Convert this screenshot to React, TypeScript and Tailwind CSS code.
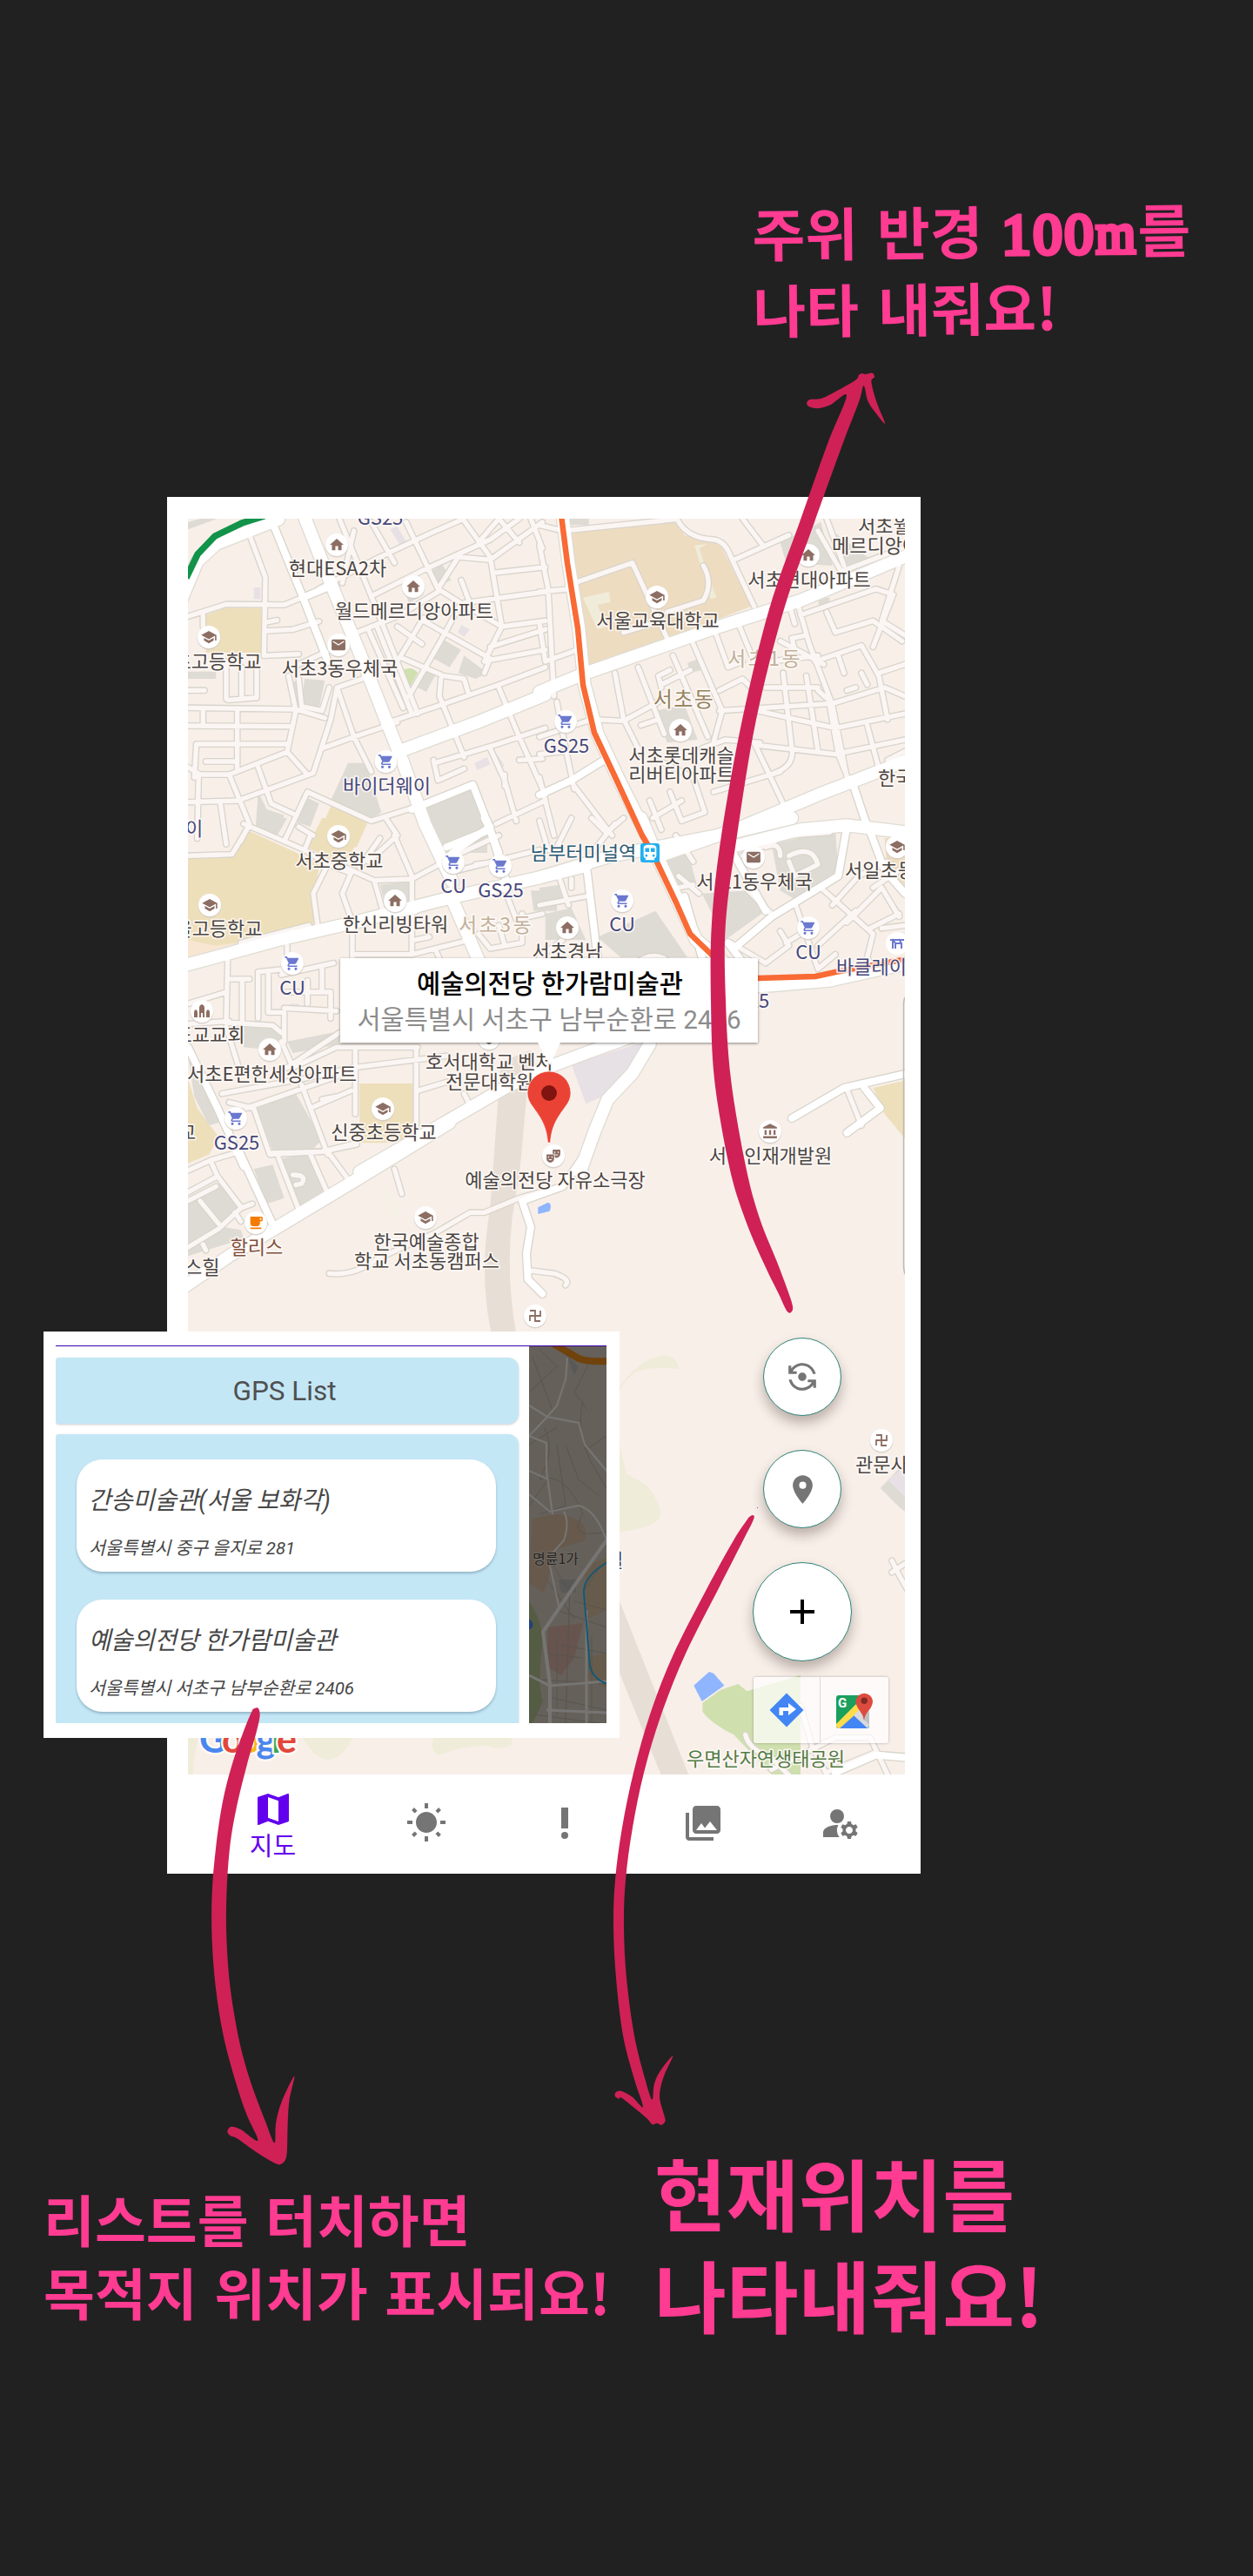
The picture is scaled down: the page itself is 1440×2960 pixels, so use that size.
import React from "react";
import {
  MdAccountBalance,
  MdAdd,
  MdDirectionsTransit,
  MdFlipCameraAndroid,
  MdHome,
  MdLocalCafe,
  MdLocationOn,
  MdMail,
  MdManageAccounts,
  MdMap,
  MdPhotoLibrary,
  MdPriorityHigh,
  MdSchool,
  MdShoppingCart,
  MdTheaterComedy,
  MdWbSunny,
} from "react-icons/md";

type Pt = [number, number];

/* ---------- geometry helpers ---------- */

function place(points: Pt[], ox: number, oy: number, sx: number, sy: number): Pt[] {
  return points.map(([x, y]) => [ox + x * sx, oy + y * sy] as Pt);
}

function smooth(p: Pt[]): string {
  let d = `M${p[0][0].toFixed(1)} ${p[0][1].toFixed(1)}`;
  for (let i = 0; i < p.length - 1; i++) {
    const a = p[Math.max(0, i - 1)];
    const b = p[i];
    const c = p[i + 1];
    const e = p[Math.min(p.length - 1, i + 2)];
    const c1 = [b[0] + (c[0] - a[0]) / 6, b[1] + (c[1] - a[1]) / 6];
    const c2 = [c[0] - (e[0] - b[0]) / 6, c[1] - (e[1] - b[1]) / 6];
    d += `C${c1[0].toFixed(1)} ${c1[1].toFixed(1)} ${c2[0].toFixed(1)} ${c2[1].toFixed(1)} ${c[0].toFixed(1)} ${c[1].toFixed(1)}`;
  }
  return d + "Z";
}

/* ---------- map data: every tile is drawn at three units per pixel ---------- */

type Area = [string, string];
type Tile = { x: number; y: number; areas: Area[]; minor: string[]; mid: string[]; major: string[] };

const GRAY = "#dedbd4";
const TAN = "#eedfbb";
const CAMPUS = "#eedcc1";
const LILAC = "#e7e1e6";
const GREEN = "#cfdfae";
const PALE = "#efecd9";
const WATER = "#8fb5ff";

const tiles: Tile[] = [
  {
    x: 180,
    y: 560,
    areas: [
      ["M168 440L240 415H360V570H170Z", TAN],
      ["M600 1100L730 1150L690 1240H540Z", TAN],
      ["M108 635H205V660H108Z", GRAY],
      ["M108 145L210 108H150L108 120Z", GRAY],
      ["M510 660L580 665L560 760L500 745Z", GRAY],
      ["M470 670L500 670L485 740Z", GRAY],
      ["M660 950L720 950L775 1120L745 1140L600 1080Z", GRAY],
      ["M920 1110L1085 1040L1140 1180V1260H990Z", GRAY],
      ["M500 1060L560 1090L530 1170L470 1150Z", GRAY],
      ["M350 1050L380 1110L440 1130L410 1200L340 1190Z", GRAY],
      ["M945 290L985 265L1015 320L970 340Z", GRAY],
      ["M980 520L1050 560L1010 620L955 590Z", GRAY],
      ["M1060 580L1140 640L1100 660L1040 640Z", GRAY],
      ["M930 620L965 640L930 705L900 690Z", GRAY],
      ["M850 340L900 330L920 370L870 400Z", GRAY],
      ["M335 345H358V385H335Z", LILAC],
      ["M805 145L830 135L860 185L840 200Z", LILAC],
      ["M1050 475L1080 490L1060 515L1038 500Z", LILAC],
      ["M1095 950L1140 930L1150 955L1105 975Z", LILAC],
      ["M1175 920L1200 960L1180 980Z", LILAC],
      ["M850 630Q880 615 900 640L875 685Z", GREEN],
    ],
    minor: [
      "M315 150L375 310L370 580L490 575",
      "M108 445L240 403L440 405L600 340",
      "M375 495L470 490L560 462",
      "M380 465L415 458",
      "M160 440V480",
      "M240 600V725Q240 733 250 733L345 725V620",
      "M293 620V725",
      "M108 760L480 765L580 795",
      "M108 822L460 824",
      "M160 765V820",
      "M278 765V975",
      "M130 1000L137 885L450 885",
      "M170 945H270",
      "M108 965L150 990L250 990L450 912L480 770L455 650",
      "M450 912L520 990",
      "M350 965L395 1090L470 1125",
      "M250 990L320 1160L290 1220",
      "M108 1085L280 1080L540 985L600 800L622 690L710 660",
      "M520 1050L440 1220",
      "M520 1050L740 1150L900 1100",
      "M570 900L680 860L830 810",
      "M622 690L680 860L740 980",
      "M490 660L500 755L570 770L595 690",
      "M490 610L600 560",
      "M145 990L140 1210",
      "M220 1090L240 1230",
      "M108 700L165 700",
      "M630 108L750 400L900 780",
      "M680 150L640 330",
      "M560 350L760 245L940 160L1060 108",
      "M750 370L920 285L1150 180L1250 108",
      "M740 120L820 260",
      "M860 120L970 350L1050 400L1190 480",
      "M690 500L840 440L970 360",
      "M970 350L1040 240L1150 250L1330 120",
      "M1060 115L1150 240L1190 480L1130 600",
      "M1110 190L1180 108",
      "M1180 108L1250 190",
      "M1290 108L1330 210",
      "M1060 398L1340 360",
      "M1160 295L1340 275",
      "M1050 320L1080 400",
      "M1190 480L1340 460",
      "M1150 595L1340 560",
      "M1150 550L1340 490",
      "M830 600L920 450",
      "M870 720L990 510L1050 400",
      "M850 590L990 650L1060 660L1075 710",
      "M920 460L1150 590L1130 640",
      "M830 480L915 540",
      "M760 480L880 780",
      "M730 490L850 760",
      "M800 810L980 750L1180 680L1340 620",
      "M980 660L975 720L1020 830L1060 930",
      "M1180 690L1250 860L1340 1060",
      "M960 950L1160 890L1340 830",
      "M1150 900L1200 1010L1240 1150",
      "M955 940L970 1010L1060 970",
      "M1200 990V1030",
      "M1170 1160L1340 1080",
      "M1250 940L1330 935",
    ],
    mid: [
      "M395 110L505 380L590 600",
      "M505 380L600 340",
      "M880 1110L1090 1025L1150 1180L1180 1260",
      "M1020 1260L1150 1170",
    ],
    major: ["M505 90L600 330L700 570L790 800L850 950L925 1160L1020 1360", "M850 905L1100 812L1340 715", "M80 400L140 255L205 195L420 110"],
  },
  {
    x: 620,
    y: 560,
    areas: [
      ["M110 155L470 110L500 165L620 190L730 410L165 630Z", CAMPUS],
      ["M150 380L240 360L245 395L200 405L230 480L200 490Z", PALE],
      ["M535 200L580 195L550 210L610 380L590 385Z", PALE],
      ["M830 190L970 120L1010 270L850 260Z", GRAY],
      ["M1010 150L1130 240L1200 230L1040 275Z", GRAY],
      ["M960 380H1000V420H965Z", GRAY],
      ["M510 605L550 590L560 630L520 640Z", GRAY],
      ["M400 770L500 750L545 870L440 880Z", GRAY],
      ["M100 108H170V130H105Z", GRAY],
    ],
    minor: [
      "M0 130L80 150L470 110",
      "M470 100Q500 175 600 180Q640 185 660 240L740 410",
      "M700 108L770 200",
      "M670 250L860 165",
      "M120 330L320 260L440 520",
      "M565 270Q600 330 565 390L440 430",
      "M290 500L420 460",
      "M0 360L110 350",
      "M30 350L50 720",
      "M0 470L20 600L130 560",
      "M0 200L30 350",
      "M960 150L1040 290L1250 210",
      "M990 108L1050 270",
      "M860 400L880 470",
      "M890 400L930 540L1010 750L1060 1000",
      "M900 440L1160 350L1220 370L1150 550",
      "M990 430L1020 500L1150 460L1250 530",
      "M1240 270L1180 460L1260 510",
      "M880 560L870 520L920 510",
      "M950 600L1110 545L1170 650L1200 800",
      "M1030 580L1050 640",
      "M1110 640L1130 680",
      "M1060 700L1090 690",
      "M1170 640L1260 610",
      "M960 700L1010 745L1190 690L1260 720",
      "M830 530L980 610",
      "M620 770L1010 745",
      "M460 580L580 860",
      "M530 540L630 770L600 880",
      "M610 510L650 620L700 600",
      "M690 480L740 600",
      "M620 700L700 660L740 700",
      "M420 680L520 630",
      "M340 620L430 850",
      "M260 640L290 800",
      "M420 690L410 650L450 630",
      "M180 800L290 805L410 740",
      "M290 800L350 920",
      "M350 820L410 800",
      "M750 770L1020 830L1260 780",
      "M760 890L1020 920L1260 870",
      "M840 640L870 900",
      "M920 650L960 910",
      "M1000 750L1030 920L1070 1020",
      "M1130 820L1170 970",
      "M740 880L840 1090",
      "M870 900Q880 960 810 985",
      "M560 900L640 870L760 880",
      "M450 1050L490 1150L570 1120L530 1000L430 950",
      "M380 1080L420 1180",
      "M0 920L90 910",
      "M90 900L120 1040",
      "M60 740L90 900",
      "M180 800L0 860",
      "M120 1030L250 1200",
      "M0 1000L50 1200",
      "M260 1160L180 1260",
      "M390 1140L490 1080",
      "M830 980L600 1050",
      "M1200 940L1260 910",
      "M800 600L960 580",
      "M780 690L960 690",
    ],
    mid: ["M0 1060L110 1010L215 945", "M1080 1020L1130 1170"],
    major: [
      "M0 705L160 640L620 480L900 390L1270 235",
      "M80 100L100 260L135 480L155 680L200 850L270 1000L370 1200",
      "M400 1275L700 1170L960 1060L1270 940",
    ],
  },
  {
    x: 180,
    y: 940,
    areas: [
      ["M320 45L560 155L540 370L200 450L108 470V135L260 130Z", TAN],
      ["M108 420L200 440L280 430L108 480Z", "#f8e6d2"],
      ["M570 0H730L700 70L640 170L520 100Z", TAN],
      ["M700 915H885V1120H700Z", TAN],
      ["M108 900L140 1000L215 1100L180 1160L108 1190Z", TAN],
      ["M108 820L150 850L215 1050L180 1060L130 960Z", GRAY],
      ["M360 0H450L410 70L345 40Z", GRAY],
      ["M940 0H1120L1130 40L1010 100Z", GRAY],
      ["M345 1000L480 950L570 1110L540 1140L400 1145Z", GRAY],
      ["M300 720H430L440 780L400 800L300 790Z", GRAY],
      ["M450 770L630 735V780L470 810Z", GRAY],
      ["M770 230L870 220V320L790 310Z", GRAY],
      ["M1290 250H1380V320H1300Z", GRAY],
      ["M460 640H490V660H460Z", LILAC],
    ],
    minor: [
      "M108 130L260 125L320 25",
      "M300 20L510 110L530 60",
      "M510 110L590 160L540 260L555 370",
      "M590 160L670 190L640 260L675 360V480",
      "M540 60L490 30",
      "M650 170L750 215L880 210L1050 120L1180 60",
      "M750 215L780 320",
      "M820 60L880 200L880 470",
      "M680 470H880L1080 420",
      "M770 70L700 170",
      "M730 150L830 60L790 0",
      "M880 330L940 290",
      "M1040 180L1320 110",
      "M1190 220L1240 350L1330 330",
      "M1100 160L1180 150",
      "M960 450L990 520",
      "M890 420L940 410",
      "M1110 400L1150 450L1260 430V330",
      "M1180 370L1200 440",
      "M290 430L525 370",
      "M245 490L240 700",
      "M108 640L240 600",
      "M255 555H320",
      "M295 560V700",
      "M240 705L400 715L430 740",
      "M350 690V530L450 520L430 540L610 500",
      "M385 540V670H440V770",
      "M450 440V490",
      "M440 600H570V520",
      "M440 655L620 665",
      "M520 560V640",
      "M550 600L600 600",
      "M600 600V690",
      "M108 710L250 700",
      "M240 720L280 850",
      "M430 770L470 860L620 790H900",
      "M450 860L630 740",
      "M225 950L500 900L680 860L1000 820",
      "M685 790V1020",
      "M895 790V1080",
      "M310 1000L510 930L680 870",
      "M335 1000L390 1160L570 1150L690 1120",
      "M500 920L590 1160",
      "M530 1000L670 940",
      "M570 970L620 960",
      "M250 980L330 1000",
      "M900 940L1000 910",
      "M1060 950L1080 990",
    ],
    mid: ["M108 790L210 1000L300 1200", "M1000 100L1150 40L1130 0", "M1140 10L1210 230"],
    major: [
      "M108 505L420 420L700 355L1010 275L1320 205L1480 165",
      "M1010 260L1110 490L1200 700",
      "M700 1220L960 1070L1200 930L1320 870L1480 810L1700 730",
    ],
  },
  {
    x: 620,
    y: 940,
    areas: [
      ["M420 150L510 110L540 220L470 260Z", GRAY],
      ["M560 260L720 250L780 320L640 420Z", GRAY],
      ["M200 410L400 320L510 480H280Z", GRAY],
      ["M800 90L1020 40L1030 180L880 280L830 250Z", GRAY],
      ["M0 240L70 230L80 290L0 300Z", GRAY],
      ["M20 330L110 310L160 420L20 420Z", GRAY],
      ["M1190 70L1260 60V250L1200 200Z", CAMPUS],
      ["M110 850L350 775H380L240 950L160 985Z", LILAC],
      ["M1150 930L1260 905V1105L1190 1020Z", TAN],
    ],
    minor: [
      "M0 10L30 110",
      "M110 0L60 100",
      "M180 0L230 50L290 0",
      "M0 300L160 270",
      "M70 210L100 300",
      "M110 210V240",
      "M470 60L530 150",
      "M480 240L530 230",
      "M550 260L480 200",
      "M700 130L850 60L1000 50",
      "M860 130Q940 90 960 160L880 200L860 150",
      "M830 130Q830 80 780 100",
      "M720 250L800 330",
      "M880 290L960 520",
      "M970 240L1150 400L1130 480L1150 520",
      "M1010 300L1100 200L1200 150",
      "M1060 360L1180 240L1240 340",
      "M960 440L1090 320",
      "M1180 380L1260 370",
      "M1150 240L1240 180",
      "M780 500L860 440L830 390",
      "M780 500L660 430",
      "M850 430L900 400",
      "M960 520L1020 470",
      "M1140 380L1240 330",
      "M320 510Q400 440 460 510",
      "M1060 935L1110 1060",
      "M0 480L80 420",
    ],
    mid: [
      "M165 190L200 480",
      "M670 450L800 340L1030 200L1060 30",
      "M650 90L780 320",
      "M1130 20L1190 180L1260 260",
      "M870 1035L1050 930L1270 880",
      "M1120 930L1175 1000L1060 1085",
      "M500 270L560 480",
      "M650 430L740 550",
    ],
    major: [
      "M0 205L250 130L640 55L870 0",
      "M350 0L400 120L480 290L540 420L640 500L760 580L1000 560L1270 500",
      "M660 100L900 40L1060 25L1270 50",
      "M380 780L320 880L235 970L190 1080L140 1220",
    ],
  },
  {
    x: 180,
    y: 1300,
    areas: [
      ["M108 230L210 180L300 260L220 330L108 400Z", GRAY],
      ["M430 95L520 75L580 210L490 270Z", GRAY],
      ["M335 130L400 115L440 230L380 250Z", GRAY],
      ["M108 390L230 330L290 340L300 370L108 430Z", GRAY],
      ["M1187 -240L1290 -280L1250 160Q1190 420 1240 700H1155Q1110 500 1150 260Z", "#e7ded5"],
      ["M1315 262L1350 245Q1365 250 1355 275L1315 285Z", WATER],
      ["M770 200L790 190L850 280L810 305Z", "#f6f1e6"],
    ],
    minor: [
      "M108 135L185 100L270 75",
      "M185 100L210 155L290 260",
      "M210 155L108 210",
      "M108 240L205 190",
      "M150 240L215 320",
      "M108 400L215 335L290 265L330 250",
      "M270 280L290 310",
      "M390 75L570 70L690 45",
      "M420 90L490 270",
      "M530 80L590 215",
      "M590 70L660 165",
      "M470 150Q520 150 500 180L480 185",
      "M820 130L845 215",
      "M595 490Q680 500 760 440L960 350L1080 280L1130 280L1250 230L1320 210",
      "M1290 480L1370 490Q1430 510 1410 530",
      "M160 390L170 410",
    ],
    mid: ["M285 70L400 320", "M1260 240L1290 330L1275 420L1280 510L1330 560", "M1260 240L1400 190L1490 60"],
    major: ["M60 560L250 430L700 160L1010 -30"],
  },
  {
    x: 700,
    y: 1660,
    areas: [
      ["M36 0L60 100L130 140Q180 200 176 250Q150 290 36 300Z", PALE],
      ["M20 480L36 540L275 1140H180L0 700Z", "#e7ded5"],
      ["M292 830L345 783L360 788L397 830L320 885Z", WATER],
      ["M322 890L385 845L445 825L475 850L660 795V1137H560L430 1000Q350 960 322 920Z", GREEN],
      ["M935 150L1020 60V230L1000 215Z", GRAY],
      ["M960 120L1020 80V180Z", LILAC],
    ],
    minor: [
      "M470 1000Q480 1050 560 1080L620 1140",
      "M660 900L700 1040L750 1137",
      "M560 1120L780 1010L900 1010L960 1137",
      "M975 400L1000 450L1040 520",
      "M975 440L1020 410",
      "M750 1130L920 1060",
    ],
    mid: ["M780 1130L920 1070L1040 1080"],
    major: [],
  },
];

/* ---------- labels and points of interest, in map pixels ---------- */

const INK = "#4a4543";
const SHOP = "#45477c";

type Label = { x: number; y: number; t: string; c?: string; s?: boolean; size?: number; sp?: number };

const labels: Label[] = [
  { x: 437, y: 603, t: "GS25", c: SHOP },
  { x: 388, y: 661, t: "현대ESA2차" },
  { x: 476, y: 710, t: "월드메르디앙아파트" },
  { x: 250, y: 768, t: "초고등학교" },
  { x: 390.5, y: 776, t: "서초3동우체국" },
  { x: 444.5, y: 911, t: "바이더웨이", c: SHOP },
  { x: 213, y: 960, t: "웨이", c: SHOP },
  { x: 756, y: 721, t: "서울교육대학교" },
  { x: 986, y: 612, t: "서초월드", s: true },
  { x: 956, y: 635, t: "메르디앙아파트", s: true },
  { x: 930, y: 674, t: "서초현대아파트" },
  { x: 879, y: 765, t: "서초1동", c: "#c1b09a", size: 23, sp: 2.5 },
  { x: 786, y: 812, t: "서초동", c: "#95825f", size: 24, sp: 1.5 },
  { x: 651, y: 865, t: "GS25", c: SHOP },
  { x: 783, y: 876, t: "서초롯데캐슬" },
  { x: 783, y: 898, t: "리버티아파트" },
  { x: 1009, y: 902, t: "한국", s: true },
  { x: 390, y: 997, t: "서초중학교" },
  { x: 521, y: 1026, t: "CU", c: SHOP },
  { x: 575.5, y: 1031, t: "GS25", c: SHOP },
  { x: 251, y: 1075, t: "울고등학교" },
  { x: 454.5, y: 1070, t: "한신리빙타워" },
  { x: 570, y: 1071, t: "서초3동", c: "#c1b09a", size: 23, sp: 2.5 },
  { x: 336, y: 1143, t: "CU", c: SHOP },
  { x: 241, y: 1197, t: "또교교회" },
  { x: 312.5, y: 1242, t: "서초E편한세상아파트" },
  { x: 489, y: 1228, t: "호서대학교 벤처", s: true },
  { x: 512, y: 1251, t: "전문대학원", s: true },
  { x: 272, y: 1321, t: "GS25", c: SHOP },
  { x: 441, y: 1309, t: "신중초등학교" },
  { x: 205, y: 1309, t: "교", s: true },
  { x: 670.5, y: 988, t: "남부터미널역", c: "#2a5a76" },
  { x: 867, y: 1021, t: "서초1동우체국" },
  { x: 971, y: 1008, t: "서일초등학교", s: true },
  { x: 715, y: 1070, t: "CU", c: SHOP },
  { x: 652, y: 1101, t: "서초경남" },
  { x: 929, y: 1102, t: "CU", c: SHOP },
  { x: 961, y: 1119, t: "바클레이스", c: SHOP, s: true },
  { x: 858, y: 1158, t: "GS25", c: SHOP },
  { x: 885.5, y: 1336, t: "서울인재개발원" },
  { x: 638, y: 1364, t: "예술의전당 자유소극장" },
  { x: 490, y: 1435, t: "한국예술종합" },
  { x: 490.5, y: 1457, t: "학교 서초동캠퍼스" },
  { x: 295, y: 1441, t: "할리스", c: "#80503f" },
  { x: 212, y: 1464, t: "스힐", s: true },
  { x: 983, y: 1691, t: "관문사", s: true },
  { x: 706, y: 1801, t: "널" },
  { x: 880, y: 2029, t: "우면산자연생태공원", c: "#527b45" },
];

type IconType = React.ComponentType<{ x?: number; y?: number; size?: number; color?: string }>;
const BROWN = "#8d6e63";
const BLUE = "#6b78cf";

const pois: [number, number, IconType, string][] = [
  [387, 626, MdHome, BROWN],
  [475, 674, MdHome, BROWN],
  [240, 732, MdSchool, BROWN],
  [389, 741, MdMail, BROWN],
  [443.5, 875, MdShoppingCart, BLUE],
  [755, 686, MdSchool, BROWN],
  [929, 638, MdHome, BROWN],
  [650, 829, MdShoppingCart, BLUE],
  [782, 839, MdHome, BROWN],
  [389, 961, MdSchool, BROWN],
  [521, 991, MdShoppingCart, BLUE],
  [575, 995, MdShoppingCart, BLUE],
  [241, 1040, MdSchool, BROWN],
  [454, 1035, MdHome, BROWN],
  [336, 1107, MdShoppingCart, BLUE],
  [310, 1206, MdHome, BROWN],
  [271, 1285, MdShoppingCart, BLUE],
  [440, 1274, MdSchool, BROWN],
  [562, 1193, MdSchool, BROWN],
  [866, 985, MdMail, BROWN],
  [1031, 973, MdSchool, BROWN],
  [715, 1035, MdShoppingCart, BLUE],
  [652, 1066, MdHome, BROWN],
  [929, 1066, MdShoppingCart, BLUE],
  [885, 1300, MdAccountBalance, BROWN],
  [636, 1328, MdTheaterComedy, BROWN],
  [489, 1399, MdSchool, BROWN],
  [294, 1405, MdLocalCafe, "#f57c00"],
];

/* Temple marks, drawn as strokes */
const temples: Pt[] = [
  [615, 1512],
  [1013, 1655],
];

function Roads({ kind, width, color }: { kind: "minor" | "mid" | "major"; width: number; color: string }) {
  return (
    <g fill="none" stroke={color} strokeWidth={width} strokeLinejoin="round" strokeLinecap="round">
      {tiles.map((t, i) => (
        <path key={i} transform={`translate(${t.x} ${t.y}) scale(.33333)`} d={t[kind].join("")} />
      ))}
    </g>
  );
}

function CityMap() {
  return (
    <svg className="block h-[1443px] w-[824px]" viewBox="216 596 824 1443">
      <rect x="216" y="596" width="824" height="1443" fill="#f8efe9" />
      {tiles.map((t, i) => (
        <g key={i} transform={`translate(${t.x} ${t.y}) scale(.33333)`}>
          {t.areas.map(([d, c], j) => (
            <path key={j} d={d} fill={c} />
          ))}
        </g>
      ))}
      <path d="M712 1594Q735 1560 765 1557Q780 1562 780 1573Q745 1570 730 1577Q715 1588 712 1600Z" fill={PALE} />
      <path d="M216 1990H232Q222 2010 222 2039H216Z" fill={PALE} />
      <path d="M344 1990H409Q378 2054 344 1990Z" fill={PALE} />
      <path d="M500 1990H588V2005Q575 2012 560 2006Q530 2006 505 2017Q492 2014 500 1990Z" fill={PALE} />
      <Roads kind="minor" width={24} color="#d8d5cb" />
      <Roads kind="mid" width={32} color="#d8d5cb" />
      <Roads kind="major" width={50} color="#dfdcd3" />
      <Roads kind="minor" width={16} color="#fbf5f4" />
      <Roads kind="mid" width={24} color="#ffffff" />
      <Roads kind="major" width={42} color="#ffffff" />

      <path d="M214 664L227 637L247 616L278 601L304 593" fill="none" stroke="#12934a" strokeWidth="7.500" />
      <path
        d="M645 592L652 647L664 722L670 787L683 842L707 893L738 960L750 980L777 1037L793 1073L825 1104L871 1124L937 1122L960 1117L1042 1102"
        fill="none"
        stroke="#f96a34"
        strokeWidth="6.500"
        strokeLinejoin="round"
      />
      <g>
        <rect x="736" y="969" width="22" height="22" rx="3" fill="#22aef0" />
        <MdDirectionsTransit x={736} y={969} size={22} color="#fff" />
      </g>

      {pois.map(([x, y, Icon, c], i) => (
        <g key={i}>
          <circle cx={x} cy={y + 1} r="13.400" fill="#cfc9c3" opacity="0.8" />
          <circle cx={x} cy={y} r="13" fill="#fff" />
          <Icon x={x - 9.5} y={y - 9.5} size={19} color={c} />
        </g>
      ))}
      {temples.map(([x, y], i) => (
        <g key={i}>
          <circle cx={x} cy={y + 1} r="13.400" fill="#cfc9c3" opacity="0.8" />
          <circle cx={x} cy={y} r="13" fill="#fff" />
          <path
            d={`M${x - 6} ${y - 6}H${x}V${y + 6}H${x + 6}M${x - 6} ${y + 6}V${y}H${x + 6}V${y - 6}`}
            fill="none"
            stroke={BROWN}
            strokeWidth="1.800"
          />
        </g>
      ))}
      <g transform="translate(1031 1084)">
        <circle r="13" fill="#fff" />
        <path d="M-8 -4H8M-5 -5L-2 0V6M2 -5L5 0V6M-2 0H5M-5 -3V6" stroke={BLUE} strokeWidth="2" fill="none" />
      </g>
      <g transform="translate(232 1162)">
        <circle cy="1" r="13.400" fill="#cfc9c3" opacity="0.8" />
        <circle r="13" fill="#fff" />
        <path d="M-3 7V-4Q-3 -7 0 -8Q3 -7 3 -4V7H1V2H-1V7ZM-9 7V1Q-9 -1 -7 -2Q-5 -1 -5 1V7ZM5 7V1Q5 -1 7 -2Q9 -1 9 1V7Z" fill={BROWN} />
      </g>

      <g
        className="font-['Noto_Sans_CJK_KR',sans-serif]"
        stroke="#fffaf7"
        strokeOpacity="0.85"
        strokeWidth="3.500"
        strokeLinejoin="round"
        paintOrder="stroke"
      >
        {labels.map((l, i) => (
          <text
            key={i}
            x={l.x}
            y={l.y}
            fill={l.c ?? INK}
            fontSize={l.size ?? 22}
            letterSpacing={l.sp ?? 0}
            textAnchor={l.s ? "start" : "middle"}
          >
            {l.t}
          </text>
        ))}
      </g>

      <path d="M1040 1146Q1038.500 1149 1038.500 1155V1452Q1038.500 1460 1040 1464" fill="none" stroke="#bdbab6" strokeWidth="1.500" />

      <g className="font-['Lato',sans-serif]" fontSize="43" fontWeight="700" stroke="#fdf9f5" strokeWidth="5" paintOrder="stroke" strokeLinejoin="round">
        <text x="229" y="2014" textLength="112">
          <tspan fill="#4a86ee">G</tspan>
          <tspan fill="#e2473b">o</tspan>
          <tspan fill="#f6b912">o</tspan>
          <tspan fill="#4a86ee">g</tspan>
          <tspan fill="#3aa757">l</tspan>
          <tspan fill="#e2473b">e</tspan>
        </text>
      </g>
    </svg>
  );
}

function InfoWindow() {
  return (
    <div className="absolute left-[175px] top-[505px] flex h-[97px] w-[480px] flex-col items-center bg-white shadow-[0_1px_3px_rgba(0,0,0,0.45)]">
      <div className="mt-[8px] whitespace-nowrap pl-[2px] font-['Noto_Sans_CJK_KR',sans-serif] text-[29.6px] font-medium leading-[40px] text-black">
        예술의전당 한가람미술관
      </div>
      <div className="mt-[3px] whitespace-nowrap font-['Roboto','Noto_Sans_CJK_KR',sans-serif] text-[29.5px] leading-[40px] text-[#8c8c8c]">
        서울특별시 서초구 남부순환로 2406
      </div>
      <svg className="absolute left-[212px] top-[97px] h-[120px] w-[56px]" viewBox="603 1198 56 120">
        <path d="M618 1198H644L632 1224Z" fill="#fff" />
        <path
          d="M629.500 1313C628 1293 621 1284 612.500 1272Q606 1264 606 1256A25 25 0 0 1 656 1256Q656 1264 649.500 1272C641 1284 634 1293 632.500 1313Z"
          fill="#ea4335"
          stroke="#fff"
          strokeWidth="0.600"
        />
        <circle cx="631" cy="1256" r="9" fill="#811411" />
      </svg>
    </div>
  );
}

function MapControls() {
  const fab = "absolute flex items-center justify-center rounded-full border border-[#2f8378] bg-white shadow-[0_8px_14px_rgba(60,40,30,0.32)]";
  return (
    <>
      <button className={`${fab} left-[661px] top-[941px] h-[90px] w-[90px]`}>
        <MdFlipCameraAndroid className="text-[38px] text-[#757575]" />
      </button>
      <button className={`${fab} left-[661px] top-[1070px] h-[90px] w-[90px]`}>
        <MdLocationOn className="text-[39px] text-[#757575]" />
      </button>
      <button className={`${fab} left-[649px] top-[1199px] h-[114px] w-[114px]`}>
        <MdAdd className="text-[48px] text-black" />
      </button>
      <div className="absolute left-[650px] top-[1331px] flex h-[76px] w-[155px] divide-x divide-[#dcd8d4] rounded-[3px] bg-white/70 shadow-[0_0_3px_rgba(0,0,0,0.3)]">
        <div className="flex w-[77px] items-center justify-center">
          <svg className="h-[40px] w-[40px]" viewBox="0 0 40 40">
            <path d="M20 .500L39.500 20L20 39.500L.500 20Z" fill="#4285f4" />
            <path d="M11.500 26V17H22V12L31 19L22 26V21H16V26Z" fill="#fff" />
          </svg>
        </div>
        <div className="flex flex-1 items-center justify-center">
          <svg className="h-[46px] w-[46px]" viewBox="0 0 46 46">
            <rect x="2" y="6" width="38" height="38" rx="3" fill="#1a9f5c" />
            <path d="M3 43L21 26L39 44H5Z" fill="#4285f4" />
            <path d="M2 39L30 11L33 20L6 44Q2 44 2 41Z" fill="#fddc4b" />
            <path d="M22 29L34 17L40 20V41L38 44Z" fill="#d9dadd" />
            <path d="M40 24L32 32L40 40Z" fill="#bfc1c4" />
            <text x="4" y="20" className="font-['Roboto',sans-serif]" fontSize="15" fontWeight="700" fill="#fff">
              G
            </text>
            <path d="M34 35C33 25 24.500 22 24.500 12.500A9.800 9.800 0 0 1 44 12.500C44 22 35 25 34 35Z" fill="#dd4b3e" />
            <circle cx="34.200" cy="12.300" r="3.700" fill="#822a24" />
          </svg>
        </div>
      </div>
    </>
  );
}

function NavBar() {
  return (
    <nav className="flex h-[114px] w-[830px] pb-[2px] text-[48px] text-[#757575]">
      <div className="flex w-[195px] flex-col items-center pt-[16px] text-[#6200ee]">
        <MdMap />
        <span className="-mt-[4px] font-['Noto_Sans_CJK_KR',sans-serif] text-[29px] leading-[40px]">지도</span>
      </div>
      <div className="flex w-[158px] items-center justify-center">
        <MdWbSunny />
      </div>
      <div className="flex w-[159px] items-center justify-center">
        <MdPriorityHigh />
      </div>
      <div className="flex w-[159px] items-center justify-center">
        <MdPhotoLibrary />
      </div>
      <div className="flex w-[158px] items-center justify-center">
        <MdManageAccounts />
      </div>
    </nav>
  );
}

function DarkMap() {
  return (
    <svg className="block h-[433px] w-[89px]" viewBox="608 1547 89 433">
      <rect x="608" y="1547" width="89" height="433" fill="#65605a" />
      <path d="M608 1840Q628 1870 622 1900Q618 1940 624 1955L612 1980H608Z" fill="#545c43" />
      <path d="M612 1745L640 1740Q680 1745 672 1770L640 1780L625 1830L608 1820Z" fill="#675a4c" />
      <path d="M630 1870L670 1865L660 1905L645 1925L628 1915Z" fill="#67544f" />
      <path d="M672 1800L697 1790V1850L675 1860ZM672 1905L697 1900V1940L675 1930Z" fill="#675b4b" />
      <path d="M642 1815H662V1830H645ZM650 1555L665 1570L660 1580Z" fill="#595957" />
      <path d="M608 1860Q616 1866 610 1872H608Z" fill="#24407e" />
      <g fill="none" stroke="#58544e" strokeWidth="1">
        <path d="M608 1600L640 1570L620 1550M625 1640Q640 1665 620 1700Q650 1690 670 1740Q650 1770 697 1760M670 1610Q660 1650 685 1690L697 1710M640 1660L650 1730L620 1740M680 1560L660 1600L675 1620M630 1700L608 1730M612 1560L635 1620M650 1660L665 1700L690 1720" />
        <path d="M660 1840L697 1850M640 1850L697 1870M645 1890L697 1900M624 1900L670 1905M620 1930L697 1935M630 1950L697 1965M680 1880V1980M655 1820L650 1980M640 1880L640 1970M690 1800L670 1830M625 1810L660 1860M630 1790L655 1830M612 1970L690 1980M608 1660L640 1640M675 1665L697 1650" />
      </g>
      <g fill="none" stroke="#777573" strokeWidth="3">
        <path d="M652 1560L650 1585L640 1615L629 1628L608 1650M608 1615L629 1628L665 1635L672 1660L697 1690M608 1650L628 1658V1690L635 1740" strokeWidth="2.200" />
        <path d="M608 1717L632 1737L665 1730Q685 1735 697 1770M648 1737Q655 1750 648 1770L630 1790L643 1850M608 1690L630 1700" strokeWidth="2" />
        <path d="M697 1770L665 1815L624 1875L632 1935V1980" strokeWidth="4" />
        <path d="M608 1925L632 1937L697 1932M628 1965L697 1968M674 1850V1980" />
      </g>
      <path d="M634 1543Q655 1555 665 1561Q675 1565 697 1564" fill="none" stroke="#70420c" strokeWidth="8" />
      <path d="M698 1795Q670 1812 671 1830L678 1915Q682 1930 698 1935" fill="none" stroke="#155873" strokeWidth="2" />
      <text x="612" y="1797" fontSize="16" fill="#292420" className="font-['Noto_Sans_CJK_KR',sans-serif]" stroke="#6e6963" strokeWidth="2" paintOrder="stroke">
        명륜1가
      </text>
    </svg>
  );
}

function PlaceCard({ title, address }: { title: string; address: string }) {
  return (
    <div className="h-[129px] w-[482px] whitespace-nowrap rounded-[30px] bg-white pl-[14px] pt-[25px] font-['Roboto','Noto_Sans_CJK_KR',sans-serif] italic text-[#464646] shadow-[0_2px_3px_rgba(50,90,110,0.35)]">
      <div className="origin-left scale-x-[0.96] text-[28.6px] leading-[44px]">{title}</div>
      <div className="mt-[15px] text-[20.5px] leading-[36px]">{address}</div>
    </div>
  );
}

function GpsPanel() {
  return (
    <section className="absolute left-[50px] top-[1530px] h-[467px] w-[662px] bg-white pl-[14px] pr-[15px] pt-[16px]">
      <div className="flex h-[434px] flex-col overflow-hidden border-t border-[#3a00a8]">
        <div className="flex flex-1">
          <div className="flex w-[544px] flex-col">
            <h2 className="mt-[13px] flex h-[76px] w-[532px] items-center justify-center rounded-l-[4px] rounded-r-[12px] bg-[#c4e7f6] pr-[6px] pt-[2px] font-['Roboto',sans-serif] text-[31.5px] text-[#505050] shadow-[0_1px_3px_rgba(0,0,0,0.2)]">
              GPS List
            </h2>
            <div className="mt-[12px] flex h-[332px] w-[532px] flex-col gap-[32px] rounded-tl-[4px] rounded-tr-[12px] bg-[#c4e7f6] pl-[24px] pt-[29px] shadow-[0_1px_3px_rgba(0,0,0,0.2)]">
              <PlaceCard title="간송미술관(서울 보화각)" address="서울특별시 중구 을지로 281" />
              <PlaceCard title="예술의전당 한가람미술관" address="서울특별시 서초구 남부순환로 2406" />
            </div>
          </div>
          <DarkMap />
        </div>
      </div>
    </section>
  );
}

/* ---------- hand-drawn arrows ---------- */

const upArrow: Pt[] = [
  ...place([[422, 687], [412, 692], [400, 711], [330, 754], [290, 774], [255, 777], [244, 790], [252, 802], [280, 808], [320, 796], [372, 765]], 840, 200, 1 / 2.8, 1 / 3),
  [951, 510], [919, 600], [884, 700], [853, 827], [829, 960], [818, 1060], [817, 1150], [821, 1240], [838, 1340], [856, 1400], [877, 1450], [895, 1487], [904, 1506], [909, 1508], [911, 1501], [905, 1482],
  [893, 1450], [873, 1400], [857, 1340], [840, 1240], [834, 1150], [834, 1060], [847, 960], [869, 827], [901, 700], [936, 600], [968.5, 510],
  ...place([[412, 785], [427, 730], [440, 780], [460, 815], [496, 860], [470, 790], [452, 717], [462, 700], [455, 686], [433, 690], [422, 687]], 840, 200, 1 / 2.8, 1 / 3),
];

const leftArrow: Pt[] = place(
  [
    [310, 64], [285, 120], [245, 230], [213, 350], [190, 500], [178, 640], [178, 780], [190, 930], [215, 1080], [255, 1225], [290, 1325], [326, 1405],
    [270, 1370], [240, 1362], [228, 1376], [236, 1389], [260, 1399], [320, 1440], [380, 1475], [400, 1478], [415, 1463], [420, 1430], [422, 1350], [427, 1280], [443, 1205],
    [402, 1285], [384, 1350], [379, 1412], [350, 1345], [300, 1215], [265, 1090], [237, 930], [225, 780], [225, 640], [235, 500], [255, 380], [290, 240], [320, 140], [332, 85], [326, 61], [310, 64],
  ],
  180, 1940, 1 / 2.8, 1 / 2.7034,
);

const midArrow: Pt[] = [
  [861, 1743], [843, 1770], [810, 1830], [773, 1903], [747, 1970], [728, 2037], [715, 2100], [707, 2160], [705, 2214], [708, 2273], [716, 2339],
  ...place([[135, 140], [165, 242], [130, 208], [95, 188], [78, 192], [75, 206], [88, 215], [95, 211], [130, 240], [175, 280], [195, 303], [210, 299], [225, 305], [237, 290], [230, 260], [219, 215], [222, 175], [235, 130], [261, 67], [220, 120], [201, 165], [194, 218], [170, 140]], 680, 2340, 1 / 2.8, 1 / 3),
  [729, 2339], [720, 2273], [717, 2214], [719, 2160], [727, 2100], [740, 2037], [760, 1970], [788, 1900], [827, 1823], [853, 1772], [866, 1746], [865, 1741], [861, 1743],
];

function Arrows() {
  return (
    <svg className="pointer-events-none absolute left-0 top-0 h-[2960px] w-[1440px]" viewBox="0 0 1440 2960" fill="#cf2156">
      <path d={smooth(upArrow)} />
      <path d={smooth(leftArrow)} />
      <path d={smooth(midArrow)} />
      <circle cx="870.500" cy="1732.500" r="0.600" />
    </svg>
  );
}

export default function App() {
  return (
    <main className="relative h-[2960px] w-[1440px] overflow-hidden bg-[#212121]">
      <div className="h-[571px] pl-[865px] pt-[222px]">
        <p className="origin-left -rotate-[0.6deg] whitespace-nowrap font-['Noto_Sans_CJK_KR',sans-serif] text-[66px] font-bold leading-[88px] text-[#ff3b92] [word-spacing:7px]">
          주위 반경{" "}
          <span className="font-['Liberation_Serif',serif] text-[66px] font-normal leading-[60px] tracking-[3px] [-webkit-text-stroke:5.500px_#ff3b92]">
            100<span className="inline-block w-[48px] origin-left scale-x-[0.88]">m</span>
          </span>
          를
          <br />
          나타 내줘요!
        </p>
      </div>

      <div className="ml-[192px] h-[1582px] w-[866px] bg-white pl-[24px] pt-[25px]">
        <div className="relative h-[1443px] w-[824px] overflow-hidden">
          <CityMap />
          <InfoWindow />
          <MapControls />
        </div>
        <NavBar />
      </div>

      <GpsPanel />

      <div className="flex whitespace-nowrap pl-[50px] font-['Noto_Sans_CJK_KR',sans-serif] font-bold text-[#ff3b92]">
        <p className="w-[702px] pt-[353px] text-[64px] leading-[84px] [word-spacing:5px]">
          리스트를 터치하면
          <br />
          목적지 위치가 표시되요!
        </p>
        <p className="pt-[307px] text-[90px] leading-[117px]">
          현재위치를
          <br />
          나타내줘요!
        </p>
      </div>

      <Arrows />
    </main>
  );
}
